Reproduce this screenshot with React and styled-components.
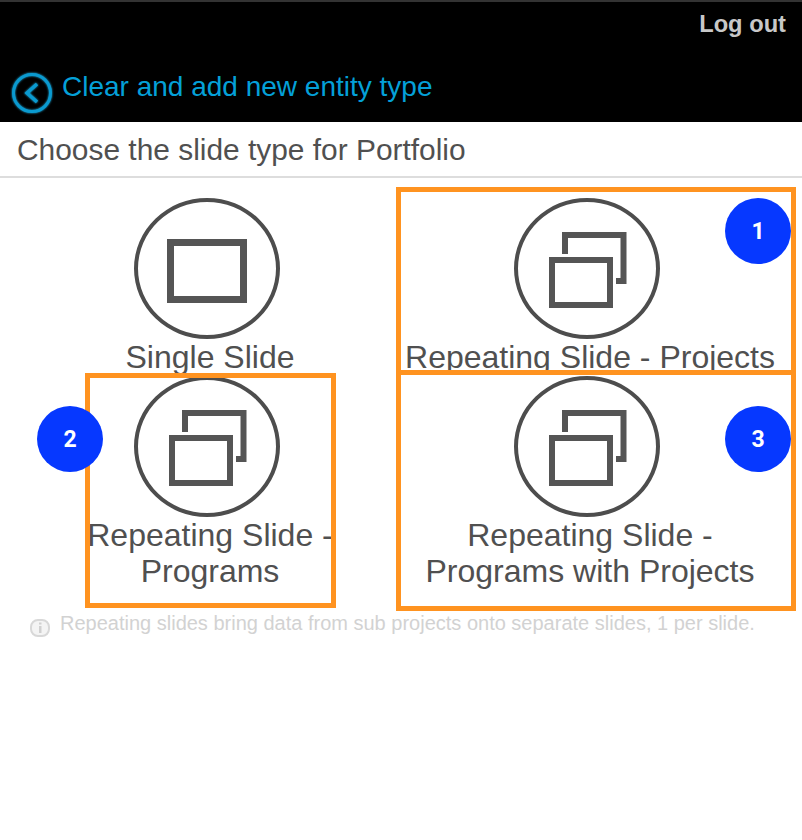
import React from "react";
import styled, { createGlobalStyle } from "styled-components";

const Global = createGlobalStyle`
  html, body { margin: 0; padding: 0; background: #fff; }
  body { font-family: "Liberation Sans", Arial, sans-serif; }
`;
const Page = styled.div`
  position: relative;
  width: 802px;
  height: 840px;
  overflow: hidden;
  background: #fff;
`;
const Header = styled.header`
  box-sizing: border-box;
  height: 122px;
  background: #000;
  border-top: 2px solid #333;
  display: flex;
  flex-direction: column;
  justify-content: space-between;
`;
const LogOut = styled.div`
  align-self: flex-end;
  margin: 9px 16px 0 0;
  font-size: 23.700px;
  line-height: 26px;
  font-weight: 700;
  color: #c8c8c8;
`;
const BackRow = styled.div`
  display: flex;
  align-items: center;
  gap: 10px;
  padding: 0 0 9px 12px;
`;
const BackIcon = styled.svg`
  filter: drop-shadow(0 0 1px #1fb4ea);
`;
const BackTitle = styled.div`
  font-size: 28px;
  line-height: 32px;
  margin-top: -12px;
  color: #04a0d8;
`;
const SubHeader = styled.div`
  box-sizing: border-box;
  height: 56px;
  padding: 11px 0 0 17px;
  border-bottom: 2px solid #ddd;
  font-size: 29.900px;
  line-height: 34px;
  color: #505050;
`;
const Grid = styled.div`
  display: grid;
  grid-template-columns: 380px 380px;
  grid-auto-rows: 178px;
  padding: 20px 0 0 20px;
`;
const Cell = styled.div`
  display: flex;
  flex-direction: column;
  align-items: center;
`;
const Circle = styled.div`
  box-sizing: border-box;
  flex: none;
  width: 146px;
  height: 141px;
  margin-right: 6px;
  border: 4px solid #4d4d4d;
  border-radius: 50%;
  display: flex;
  align-items: center;
  justify-content: center;
`;
const Label = styled.div`
  font-size: 32px;
  line-height: 36px;
  text-align: center;
  white-space: nowrap;
  color: #505050;
`;
const Note = styled.div`
  display: flex;
  align-items: flex-start;
  gap: 10px;
  margin: 57px 0 0 30px;
  font-size: 20px;
  line-height: 24px;
  color: #d2d2d2;
`;
const NoteIcon = styled.svg`
  flex: none;
  margin-top: 8px;
`;
const Highlight = styled.div`
  position: absolute;
  box-sizing: border-box;
  left: ${(p) => p.$x}px;
  top: ${(p) => p.$y}px;
  width: ${(p) => p.$w}px;
  height: ${(p) => p.$h}px;
  border: 5px solid #ff9320;
`;
const Badge = styled.div`
  position: absolute;
  left: ${(p) => p.$x - 33}px;
  top: ${(p) => p.$y - 33}px;
  width: 66px;
  height: 66px;
  border-radius: 50%;
  background: #0638ff;
  color: #fff;
  font-family: Roboto, "Liberation Sans", sans-serif;
  font-weight: 700;
  font-size: 23px;
  display: flex;
  align-items: center;
  justify-content: center;
`;

const Glyph = styled.svg`
  display: block;
  filter: blur(0.7px);
  transform: translate(${(p) => p.$dx}px, ${(p) => p.$dy}px);
`;

const SingleIcon = () => (
  <Glyph $dx={0} $dy={2} width="80" height="64" viewBox="0 0 80 64">
    <rect x="3.5" y="3.5" width="73" height="57" fill="none" stroke="#555" strokeWidth="7" />
  </Glyph>
);
const StackIcon = () => (
  <Glyph $dx={1} $dy={1} width="78" height="76" viewBox="0 0 78 76">
    <path d="M16 22V3H74.500V49H67" fill="none" stroke="#555" strokeWidth="6" />
    <rect x="3" y="28" width="58" height="45" fill="none" stroke="#555" strokeWidth="6" />
  </Glyph>
);

const items = [
  { icon: <SingleIcon />, label: ["Single Slide"] },
  { icon: <StackIcon />, label: ["Repeating Slide - Projects"] },
  { icon: <StackIcon />, label: ["Repeating Slide -", "Programs"] },
  { icon: <StackIcon />, label: ["Repeating Slide -", "Programs with Projects"] },
];

export default function App() {
  return (
    <Page>
      <Global />
      <Header>
        <LogOut>Log out</LogOut>
        <BackRow>
          <BackIcon width="40" height="40" viewBox="0 0 40 40">
            <circle cx="20" cy="20" r="18.500" fill="none" stroke="#0a9ad0" strokeWidth="3" />
            <path d="M25 11L15 20L25 29" fill="none" stroke="#0a9ad0" strokeWidth="3.500" />
          </BackIcon>
          <BackTitle>Clear and add new entity type</BackTitle>
        </BackRow>
      </Header>
      <SubHeader>Choose the slide type for Portfolio</SubHeader>
      <Grid>
        {items.map((it, i) => (
          <Cell key={i}>
            <Circle>{it.icon}</Circle>
            <Label>
              {it.label.map((l, j) => (
                <div key={j}>{l}</div>
              ))}
            </Label>
          </Cell>
        ))}
      </Grid>
      <Note>
        <NoteIcon width="20" height="18" viewBox="0 0 20 18">
          <rect x="1" y="1" width="18" height="16" rx="7" fill="#f4f4f4" stroke="#d8d8d8" strokeWidth="2" />
          <rect x="9" y="7" width="2.500" height="7" fill="#d0d0d0" />
          <rect x="9" y="3.500" width="2.500" height="2" fill="#d0d0d0" />
        </NoteIcon>
        Repeating slides bring data from sub projects onto separate slides, 1 per slide.
      </Note>
      <Highlight $x={396} $y={187} $w={400} $h={188} />
      <Highlight $x={85} $y={373} $w={251} $h={235} />
      <Highlight $x={396} $y={370} $w={400} $h={241} />
      <Badge $x={758} $y={231}>1</Badge>
      <Badge $x={70} $y={439}>2</Badge>
      <Badge $x={758} $y={439}>3</Badge>
    </Page>
  );
}
